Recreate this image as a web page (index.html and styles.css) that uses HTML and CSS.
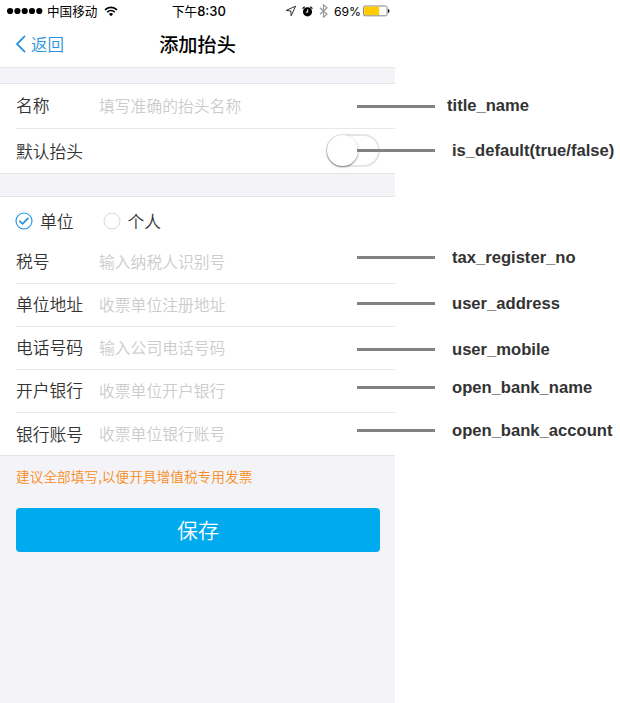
FILE: index.html
```html
<!DOCTYPE html>
<html lang="zh-CN">
<head>
<meta charset="utf-8">
<title>添加抬头</title>
<link rel="stylesheet" href="styles.css">
</head>
<body>
<main class="phone">
  <header class="top">
    <div class="status">
      <div class="carrier">
        <svg class="dots" width="36" height="8" viewBox="0 0 36 8"><circle cx="3.1" cy="4" r="3.1"/><circle cx="10.4" cy="4" r="3.1"/><circle cx="17.7" cy="4" r="3.1"/><circle cx="25" cy="4" r="3.1"/><circle cx="32.3" cy="4" r="3.1"/></svg>
        <span>中国移动</span>
        <svg class="wifi" width="14" height="11" viewBox="0 0 14 11"><path d="M1 3.8C4.4.6 9.6.6 13 3.8M3.2 6.2c2.2-2 5.4-2 7.6 0" fill="none" stroke="#000" stroke-width="1.7"/><path d="M4.9 8a3.1 3.1 0 0 1 4.2 0L7 10.2z"/></svg>
      </div>
      <div class="clock">下午<span class="digits">8:30</span></div>
      <div class="indicators">
        <svg width="12" height="12" viewBox="0 0 12 12"><path d="M10.6 1.2 1 5.5l4.9.5.2 4.8z" fill="none" stroke="#333" stroke-width="1"/></svg>
        <svg class="alarm" width="11" height="11" viewBox="0 0 11 11"><circle cx="5.5" cy="5.8" r="4.6"/><path d="M.6 2.7A6 6 0 0 1 2.8.7M8.2.7a6 6 0 0 1 2.2 2" fill="none" stroke="#000" stroke-width="1.2"/><path d="M5.7 3.4v2.8H3.8" fill="none" stroke="#fff" stroke-width="1"/></svg>
        <svg class="bluetooth" width="9" height="14" viewBox="0 0 9 14"><path d="m1 3.7 7 6.5L4.5 13.2V.8L8 3.8l-7 6.5" fill="none" stroke="#999" stroke-width="1.2"/></svg>
        <span class="percent">69%</span>
        <svg width="27" height="12" viewBox="0 0 27 12"><rect x=".5" y="1" width="23.6" height="9.8" rx="1.5" fill="#fff" stroke="#666" stroke-width=".8"/><path d="M1.2 1.7h15v8.4h-15z" fill="#fc0"/><path d="M25 4q1.5.4 1.5 2T25 8z"/></svg>
      </div>
    </div>
    <nav class="nav">
      <a class="back"><svg width="12" height="18" viewBox="0 0 12 18"><path d="M10 .9 2 9l8 8.1" fill="none" stroke="#2c93dc" stroke-width="1.8"/></svg>返回</a>
      <h1>添加抬头</h1>
    </nav>
  </header>

  <section class="group basic">
    <div class="row"><label>名称</label><span class="hint">填写准确的抬头名称</span><div class="note note-title">title_name</div></div>
    <div class="row"><label>默认抬头</label><span class="switch"></span><div class="note note-default">is_default(true/false)</div></div>
  </section>

  <section class="group details">
    <div class="choices">
      <span class="choice"><svg width="18" height="18" viewBox="0 0 18 18"><circle cx="9" cy="9" r="8" fill="none" stroke="#2593e2" stroke-width="1.1"/><path d="m4.4 8.8 3.2 3 5.8-6" fill="none" stroke="#2593e2" stroke-width="1.8"/></svg>单位</span>
      <span class="choice"><svg width="18" height="18" viewBox="0 0 18 18"><circle cx="9" cy="9" r="8" fill="none" stroke="#d8d8d8" stroke-width="1"/></svg>个人</span>
    </div>
    <div class="row"><label>税号</label><span class="hint">输入纳税人识别号</span><div class="note note-tax">tax_register_no</div></div>
    <div class="row"><label>单位地址</label><span class="hint">收票单位注册地址</span><div class="note note-address">user_address</div></div>
    <div class="row"><label>电话号码</label><span class="hint">输入公司电话号码</span><div class="note note-mobile">user_mobile</div></div>
    <div class="row"><label>开户银行</label><span class="hint">收票单位开户银行</span><div class="note note-bank">open_bank_name</div></div>
    <div class="row"><label>银行账号</label><span class="hint">收票单位银行账号</span><div class="note note-account">open_bank_account</div></div>
  </section>

  <p class="tip">建议全部填写,以便开具增值税专用发票</p>
  <button class="save">保存</button>
</main>
</body>
</html>
```
FILE: styles.css
```css
* { box-sizing: border-box; }
body {
  margin: 0;
  background: #fff;
  font-family: "Noto Sans CJK SC", sans-serif;
  color: #333;
}
svg { display: block; flex: none; }
.phone { width: 395px; height: 703px; background: #f3f3f8; }
.top { height: 68px; background: #fff; border-bottom: 1px solid #e6e6e9; }
.status {
  height: 22px;
  display: grid;
  grid-template-columns: 172px 1fr auto;
  align-items: center;
  padding: 0 5px 0 7px;
  font-size: 12.6px;
  line-height: 22px;
  color: #000;
}
.carrier { display: flex; align-items: center; gap: 4px; }
.wifi { margin-left: 3px; }
.clock { margin-left: -7px; font-weight: 400; white-space: nowrap; }
.digits { font: 500 13px "Inter", sans-serif; }
.indicators { display: flex; align-items: center; }
.alarm { margin-left: 5px; }
.bluetooth { margin-left: 6px; }
.percent { margin: 0 2px 0 6px; font: 12.2px "Inter", sans-serif; }
.nav {
  height: 45px;
  display: grid;
  grid-template-columns: 1fr auto 1fr;
  align-items: center;
  padding: 0 15px;
}
.back { display: flex; align-items: center; gap: 4px; font-size: 16.5px; font-weight: 350; line-height: 24px; padding-bottom: 1px; color: #2c93dc; }
.nav h1 { margin: 0; font-size: 19.2px; line-height: 45px; font-weight: 500; color: #000; }

.group { background: #fff; border: solid #e4e4e7; border-width: 1px 0; padding-left: 16px; }
.basic { margin-top: 15px; height: 91px; }
.basic .row { height: 45px; }
.details { margin-top: 22px; height: 260px; }
.row {
  position: relative;
  height: 43px;
  display: flex;
  align-items: center;
  padding-bottom: 2px;
  border-bottom: 1px solid #e8e8e8;
}
.row:last-child { border-bottom: 0; }
.row label { width: 83px; font-size: 16.8px; font-weight: 350; }
.hint { font-size: 15.8px; font-weight: 350; color: #ccc; }
.choices { height: 44px; display: flex; align-items: center; gap: 29px; padding-top: 4px; margin-left: -1px; }
.choice { display: flex; align-items: center; gap: 7px; font-size: 16.8px; font-weight: 350; }
.switch {
  width: 54px;
  height: 33px;
  margin: 0 15px 0 auto;
  border: 2px solid #e5e5e5;
  border-radius: 17px;
}
.switch::before {
  content: "";
  display: block;
  width: 31px;
  height: 31px;
  margin: -1px;
  border-radius: 50%;
  background: #fff;
  box-shadow: 0 1px 2px rgba(0, 0, 0, .5);
}

/* Field annotations lie over the form and extend past its right edge. */
.note {
  position: absolute;
  left: 341px;
  display: flex;
  align-items: center;
  gap: 17px;
  height: 20px;
  font: bold 16.6px/20px "Liberation Sans", sans-serif;
  white-space: nowrap;
}
.note::before { content: ""; width: 78px; height: 3px; margin-bottom: 2px; background: #828282; }
.note-title { top: 12px; gap: 12px; }
.note-title::before { margin-bottom: 0; }
.note-default { top: 12px; }
.note-tax { top: 7px; }
.note-address { top: 10px; }
.note-mobile { top: 13px; }
.note-bank { top: 8px; }
.note-account { top: 8px; }

.tip { margin: 9px 16px 0; font-size: 13.7px; font-weight: 350; line-height: 22px; color: #f78d22; }
.save {
  display: block;
  width: 364px;
  height: 44px;
  margin: 21px 0 0 16px;
  padding: 0 0 2px;
  border: 0;
  border-radius: 4px;
  background: #00aaef;
  color: #fff;
  font: 350 21px/42px "Noto Sans CJK SC", sans-serif;
}
```
